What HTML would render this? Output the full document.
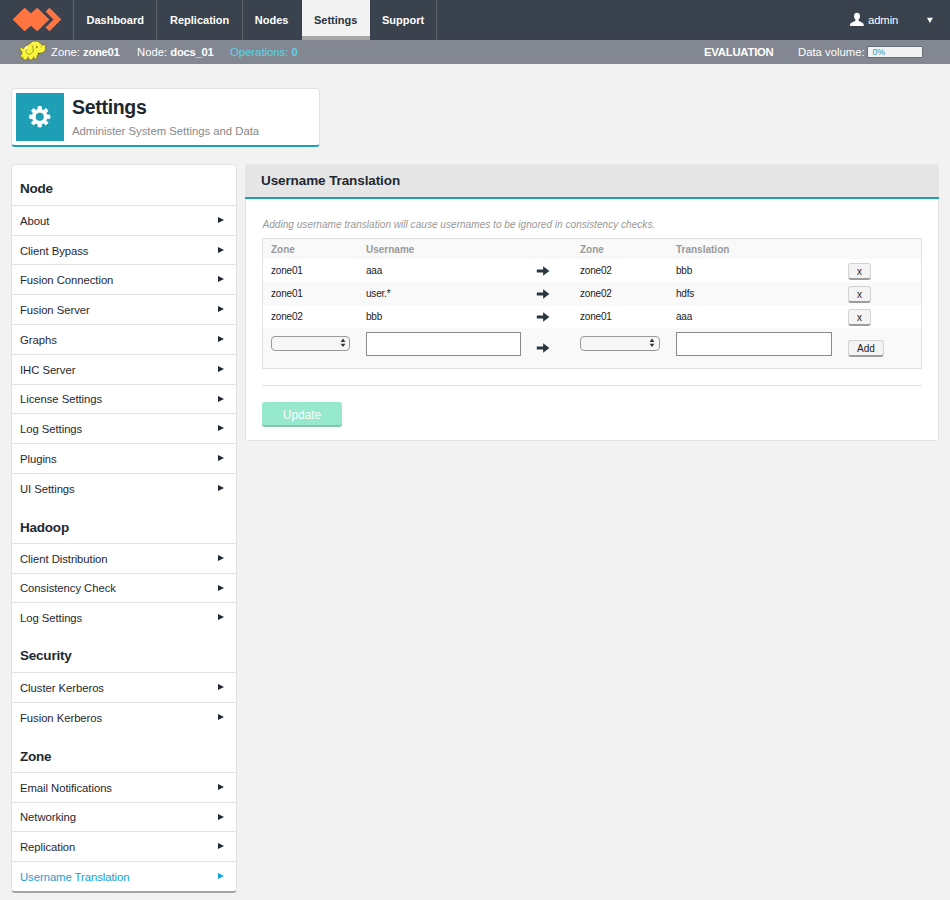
<!DOCTYPE html>
<html><head><meta charset="utf-8"><title>Settings</title>
<style>
*{box-sizing:border-box;margin:0;padding:0}
html,body{width:950px;height:900px;overflow:hidden}
body{background:#f2f2f2;font-family:"Liberation Sans",Arial,sans-serif;font-size:11.3px;color:#222;position:relative}
#nav{position:absolute;left:0;top:0;width:950px;height:40px;background:#3a424d}
#nav .logo{position:absolute;left:0;top:0}
#nav .it{position:absolute;top:0;height:40px;color:#fff;font-weight:bold;font-size:11px;line-height:40px;white-space:nowrap}
#nav .tab{position:absolute;left:302px;top:0;width:68px;height:40px;background:#f2f2f2;border-bottom:4px solid #a6a6a6}
#nav .sep{position:absolute;top:0;width:1px;height:40px;background:#5c636d}
#user{position:absolute;left:868px;top:0;line-height:40px;color:#fff;font-size:11.3px;letter-spacing:-0.1px}
#sub{position:absolute;left:0;top:40px;width:950px;height:24px;background:#838791;color:#fff;font-size:11.3px;line-height:25px}
#sub span{position:absolute;top:0;white-space:nowrap}
#sub b{font-weight:bold;letter-spacing:-0.3px}
#pbar{position:absolute;left:867px;top:46px;width:56px;height:12px;background:#f2f2f2;border:1px solid #676d78;font-size:8.8px;line-height:10px;color:#2c9ab2;padding-left:4.5px;letter-spacing:-0.2px}
#card{position:absolute;left:11px;top:88px;width:309px;height:59px;background:#fff;border:1px solid #e2e2e2;border-bottom:2px solid #1f9fb5;border-radius:4px}
#card .ic{position:absolute;left:4px;top:4px;width:48px;height:48px;background:#1f9fb5}
#card h1{position:absolute;left:60px;top:6px;font-size:19.5px;line-height:24px;font-weight:bold;color:#1f2830;letter-spacing:-0.3px}
#card p{position:absolute;left:60px;top:34px;font-size:11.3px;line-height:16px;color:#888}
#side{position:absolute;left:11px;top:164px;width:226px;height:729px;background:#fff;border:1px solid #e2e2e2;border-bottom:2px solid #a5a5a5;border-radius:4px}
#side h3{position:absolute;left:8px;font-size:13.5px;font-weight:bold;color:#1f2830;line-height:18px;letter-spacing:-0.22px}
#side .r{position:absolute;left:0;width:224px;height:30px;border-top:1px solid #e2e2e2;font-size:11.3px;line-height:31px;padding-left:8px;color:#1f2830;letter-spacing:-0.05px}
#side .r i{position:absolute;right:12px;top:11px;width:0;height:0;border-left:6px solid #1f2830;border-top:3.5px solid transparent;border-bottom:3.5px solid transparent}
#side .r.cur{color:#12a0d7}
#side .r.cur i{border-left-color:#08a5dc}
#main{position:absolute;left:245px;top:164px;width:694px;height:277px;background:#fff;border:1px solid #e2e2e2;border-radius:3px}
#main .hd{position:absolute;left:-1px;top:-1px;width:694px;height:35px;background:#e6e6e6;border-bottom:2px solid #1f9fb5;border-radius:3px 3px 0 0;font-size:13.5px;font-weight:bold;line-height:33px;padding-left:16px;color:#1f2830;letter-spacing:-0.1px}
#main .note{position:absolute;left:16.5px;top:53px;font-size:10.1px;font-style:italic;color:#999;line-height:14px;white-space:nowrap}
#tbl{position:absolute;left:16px;top:73px;width:660px;height:131px;background:#f9f9f9;border:1px solid #e0e0e0}
#tbl .row{position:absolute;left:0;width:658px;height:23px;background:#fff}
#tbl span{position:absolute;font-size:10px;line-height:14px;white-space:nowrap;color:#222;letter-spacing:-0.2px}
#tbl span.h{font-weight:bold;color:#999;letter-spacing:0}
.btn{position:absolute;height:17px;background:#f4f4f4;border:1px solid #d2d2d2;border-bottom:2px solid #9c9c9c;border-radius:3px;font-size:10px;line-height:16px;text-align:center;color:#222}
.inp{position:absolute;height:24px;background:#fff;border:1px solid #8a8a8a}
.dd{position:absolute;height:15px;background:#f6f6f6;border:1px solid #9a9a9a;border-radius:4px}
#hr{position:absolute;left:16px;top:220px;width:660px;height:1px;background:#e2e2e2}
#upd{position:absolute;left:16px;top:237px;width:80px;height:25px;background:#96e9cd;border-bottom:2px solid #84c4af;border-radius:3px;color:#fff;font-size:11.9px;text-align:center;line-height:27px}
</style></head><body>
<div id="nav">
<svg class="logo" width="73" height="40" viewBox="0 0 73 40"><path d="M12.6 19.5 L24.6 7.8 L31 13.2 L37.3 7.8 L49.3 19.5 L37.3 31.3 L31 25.8 L24.6 31.3 Z" fill="#ff7541"/><path d="M45.5 11.5 L49.5 7.8 L61.3 19.5 L49.5 31.3 L45.5 27.5 L53.5 19.5 Z" fill="#ff7541"/></svg>
<div class="tab"></div>
<div class="sep" style="left:73px"></div><div class="sep" style="left:156px"></div><div class="sep" style="left:242px"></div><div class="sep" style="left:436px"></div>
<div class="it" style="left:86.5px">Dashboard</div>
<div class="it" style="left:170px">Replication</div>
<div class="it" style="left:254.8px">Nodes</div>
<div class="it" style="left:314px;color:#2b323b">Settings</div>
<div class="it" style="left:382px">Support</div>
<svg style="position:absolute;left:850px;top:12px" width="14" height="15" viewBox="0 0 14 15"><path d="M7 0.7 C9 0.7 10 2.2 10 4 C10 5.6 9.4 6.8 8.6 7.6 L8.6 8.8 C9.6 9.6 13.7 10.6 13.7 12.6 L13.7 13.9 L0.1 13.9 L0.1 12.6 C0.1 10.6 4.4 9.6 5.4 8.8 L5.4 7.6 C4.6 6.8 4 5.6 4 4 C4 2.2 5 0.7 7 0.7 Z" fill="#fff"/></svg><svg style="position:absolute;left:926px;top:17px" width="8" height="7" viewBox="0 0 8 7"><path d="M0.9 0.7 L6.9 0.7 L3.9 6 Z" fill="#fff"/></svg><div id="user">admin</div>
</div>
<div id="sub">
<span style="left:51px">Zone: <b>zone01</b></span>
<span style="left:137px">Node: <b>docs_01</b></span>
<span style="left:230px;color:#5fd4e8">Operations: <b>0</b></span>
<span style="left:704px;"><b style="letter-spacing:-0.22px">EVALUATION</b></span>
<span style="left:798px">Data volume:</span>
</div>
<svg style="position:absolute;left:15px;top:38px" width="40" height="28" viewBox="0 0 40 28"><path d="M18.11 3.16 L22.74 3.16 L25.26 5.26 L27.37 7.37 L29.05 6.23 L30.11 7.16 L30.65 10.53 L29.68 13.47 L27.37 14.74 L24.84 15.24 L23.79 16.84 L21.89 17.68 L22.11 20.21 L20.00 21.14 L18.53 19.45 L17.05 21.98 L14.74 21.98 L13.81 20.29 L12.63 19.79 L11.45 21.98 L8.84 21.98 L7.92 20.29 L5.89 18.95 L5.18 17.26 L6.74 16.42 L6.86 13.47 L5.18 12.21 L4.97 9.77 L6.32 8.97 L8.08 10.86 L10.53 8.00 L13.89 6.32 L16.42 4.21 Z" fill="#fbf43c" stroke="#6f6a1e" stroke-width="0.75" stroke-linejoin="round"/><path d="M17.05 7.37 C18.53 10.11 18.53 12.63 17.68 14.11 C16.00 16.21 13.47 16.84 12.00 15.58 C11.03 14.32 10.86 12.63 11.37 11.03" fill="none" stroke="#7d7724" stroke-width="0.7"/><path d="M12.63 19.79 L13.39 18.11 M18.53 19.45 L18.86 17.89 M7.92 20.29 L8.42 18.53" fill="none" stroke="#7d7724" stroke-width="0.6"/><path d="M9.89 9.05 L12.42 7.79 L11.58 11.16 L10.11 12.00 Z" fill="#fffde0"/><path d="M17.05 4.42 L18.95 4.00 L17.89 5.89 Z" fill="#fffbb0"/><ellipse cx="21.89" cy="9.05" rx="1" ry="0.8" fill="#5a551a"/><circle cx="23.49" cy="15.58" r="0.75" fill="#1a1a10"/><path d="M25.26 9.05 L26.95 8.21" stroke="#8a8428" stroke-width="0.6"/></svg>
<div id="pbar">0%</div>
<div id="card"><div class="ic"><svg width="48" height="48" viewBox="0 0 48 48"><path d="M21.89 16.63 L22.16 13.52 L25.24 13.52 L25.51 16.63 L27.42 17.42 L29.81 15.41 L31.99 17.59 L29.98 19.98 L30.77 21.89 L33.88 22.16 L33.88 25.24 L30.77 25.51 L29.98 27.42 L31.99 29.81 L29.81 31.99 L27.42 29.98 L25.51 30.77 L25.24 33.88 L22.16 33.88 L21.89 30.77 L19.98 29.98 L17.59 31.99 L15.41 29.81 L17.42 27.42 L16.63 25.51 L13.52 25.24 L13.52 22.16 L16.63 21.89 L17.42 19.98 L15.41 17.59 L17.59 15.41 L19.98 17.42 Z M27.70 23.70 A4.0 4.0 0 1 0 19.70 23.70 A4.0 4.0 0 1 0 27.70 23.70 Z" fill="#fff" fill-rule="evenodd" stroke="#fff" stroke-width="1" stroke-linejoin="round"/><circle cx="23.7" cy="23.7" r="4.0" fill="#1ea0b4"/></svg></div><h1>Settings</h1><p>Administer System Settings and Data</p></div>
<div id="side">
<h3 style="top:15px">Node</h3>
<div class="r" style="top:40px">About<i></i></div>
<div class="r" style="top:70px">Client Bypass<i></i></div>
<div class="r" style="top:99px">Fusion Connection<i></i></div>
<div class="r" style="top:129px">Fusion Server<i></i></div>
<div class="r" style="top:159px">Graphs<i></i></div>
<div class="r" style="top:189px">IHC Server<i></i></div>
<div class="r" style="top:219px;line-height:29px">License Settings<i></i></div>
<div class="r" style="top:248px">Log Settings<i></i></div>
<div class="r" style="top:278px">Plugins<i></i></div>
<div class="r" style="top:308px">UI Settings<i></i></div>
<h3 style="top:354px">Hadoop</h3>
<div class="r" style="top:378px">Client Distribution<i></i></div>
<div class="r" style="top:408px;line-height:29px">Consistency Check<i></i></div>
<div class="r" style="top:437px">Log Settings<i></i></div>
<h3 style="top:482px">Security</h3>
<div class="r" style="top:507px">Cluster Kerberos<i></i></div>
<div class="r" style="top:537px">Fusion Kerberos<i></i></div>
<h3 style="top:583px">Zone</h3>
<div class="r" style="top:607px">Email Notifications<i></i></div>
<div class="r" style="top:637px;line-height:29px">Networking<i></i></div>
<div class="r" style="top:666px">Replication<i></i></div>
<div class="r cur" style="top:696px">Username Translation<i></i></div>
</div>
<div id="main">
<div class="hd">Username Translation</div>
<div class="note">Adding username translation will cause usernames to be ignored in consistency checks.</div>
<div id="tbl">
<span class="h" style="left:8px;top:4px">Zone</span>
<span class="h" style="left:103px;top:4px">Username</span>
<span class="h" style="left:317px;top:4px">Zone</span>
<span class="h" style="left:413px;top:4px">Translation</span>
<div class="row" style="top:20px"></div>
<div class="row" style="top:66px"></div>
<span style="left:8px;top:25px">zone01</span><span style="left:103px;top:25px">aaa</span><span style="left:317px;top:25px">zone02</span><span style="left:413px;top:25px">bbb</span>
<span style="left:8px;top:48px">zone01</span><span style="left:103px;top:48px">user.*</span><span style="left:317px;top:48px">zone02</span><span style="left:413px;top:48px">hdfs</span>
<span style="left:8px;top:71px">zone02</span><span style="left:103px;top:71px">bbb</span><span style="left:317px;top:71px">zone01</span><span style="left:413px;top:71px">aaa</span>
<div class="btn" style="left:585px;top:24px;width:23px">x</div>
<div class="btn" style="left:585px;top:47px;width:23px">x</div>
<div class="btn" style="left:585px;top:70px;width:23px">x</div>
<div class="btn" style="left:585px;top:101px;width:36px">Add</div>
<div class="dd" style="left:8px;top:97px;width:79px"></div>
<div class="inp" style="left:103px;top:93px;width:155px"></div>
<div class="dd" style="left:317px;top:97px;width:80px"></div>
<div class="inp" style="left:413px;top:93px;width:156px"></div>
<svg style="position:absolute;left:273px;top:26.1px" width="14" height="12" viewBox="0 0 14 12"><path d="M0.8 4.45 L7.1 4.45 L7.1 1.2 L13.4 6 L7.1 10.8 L7.1 7.55 L0.8 7.55 Z" fill="#2b373e"/></svg><svg style="position:absolute;left:273px;top:49.1px" width="14" height="12" viewBox="0 0 14 12"><path d="M0.8 4.45 L7.1 4.45 L7.1 1.2 L13.4 6 L7.1 10.8 L7.1 7.55 L0.8 7.55 Z" fill="#2b373e"/></svg><svg style="position:absolute;left:273px;top:72.0px" width="14" height="12" viewBox="0 0 14 12"><path d="M0.8 4.45 L7.1 4.45 L7.1 1.2 L13.4 6 L7.1 10.8 L7.1 7.55 L0.8 7.55 Z" fill="#2b373e"/></svg><svg style="position:absolute;left:273px;top:102.7px" width="14" height="12" viewBox="0 0 14 12"><path d="M0.8 4.45 L7.1 4.45 L7.1 1.2 L13.4 6 L7.1 10.8 L7.1 7.55 L0.8 7.55 Z" fill="#2b373e"/></svg><svg style="position:absolute;left:75.6px;top:98.0px" width="8" height="11" viewBox="0 0 8 11"><path d="M4 1.4 L6.4 4.9 L1.6 4.9 Z M1.6 6.7 L6.4 6.7 L4 9.9 Z" fill="#333"/></svg><svg style="position:absolute;left:385.4px;top:98.0px" width="8" height="11" viewBox="0 0 8 11"><path d="M4 1.4 L6.4 4.9 L1.6 4.9 Z M1.6 6.7 L6.4 6.7 L4 9.9 Z" fill="#333"/></svg></div>
<div id="hr"></div>
<div id="upd">Update</div>
</div>
</body></html>
